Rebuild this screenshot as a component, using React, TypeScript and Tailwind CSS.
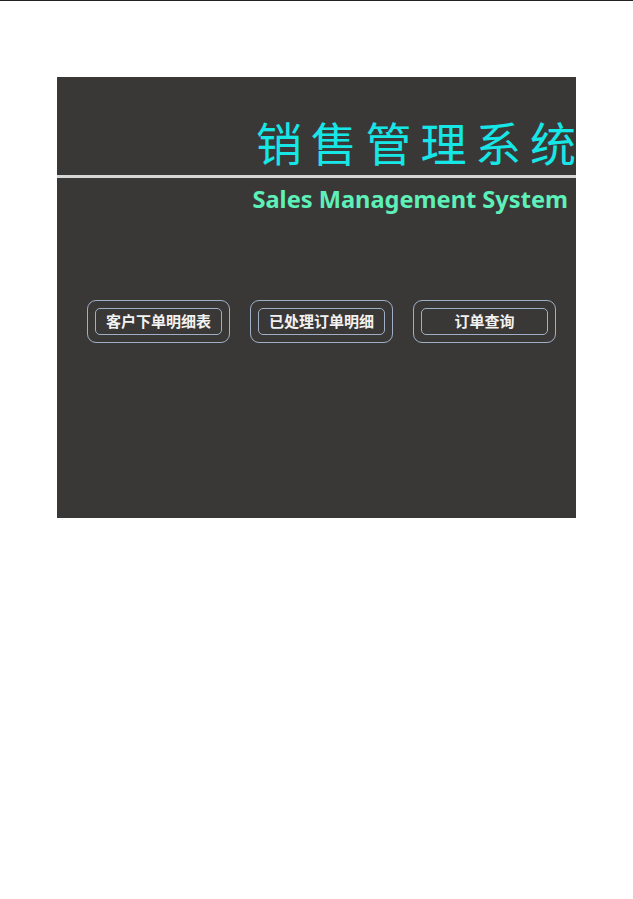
const buttons = ['客户下单明细表', '已处理订单明细', '订单查询'];
const title = ['销', '售', '管', '理', '系', '统'];

export default function App() {
  return (
    <div className="min-h-[899px] w-full bg-white border-t border-[#232323]">
      <div className="ml-[57px] mt-[76px] w-[519px] h-[441px] bg-[#3a3837] overflow-hidden flex flex-col">
        <div className="mt-[41px] flex justify-end">
          <h1
            className="flex gap-[8.8px] text-[46px] leading-none text-[#17e6e6]"
            style={{ fontFamily: '"Noto Sans CJK SC", sans-serif' }}
          >
            {title.map((ch) => (
              <span key={ch}>{ch}</span>
            ))}
          </h1>
        </div>
        <div className="mt-[11px] h-[3px] bg-[#d6d6d6]" />
        <div
          className="mt-[10px] pr-[8px] text-right text-[23.6px] leading-none font-bold text-[#5ef0b9]"
          style={{ fontFamily: '"Noto Sans", sans-serif' }}
        >
          Sales Management System
        </div>
        <div className="mt-[88px] ml-[30px] flex gap-[20px]">
          {buttons.map((label) => (
            <button
              key={label}
              className="w-[143px] h-[43px] rounded-[9px] border border-[#9fb0c6] p-[7px] flex"
            >
              <span
                className="flex-1 rounded-[5px] border border-[#9fb0c6] flex items-center justify-center text-[15px] font-bold text-[#f2f2f2]"
                style={{ fontFamily: '"Noto Sans CJK SC", sans-serif' }}
              >
                {label}
              </span>
            </button>
          ))}
        </div>
      </div>
    </div>
  );
}
